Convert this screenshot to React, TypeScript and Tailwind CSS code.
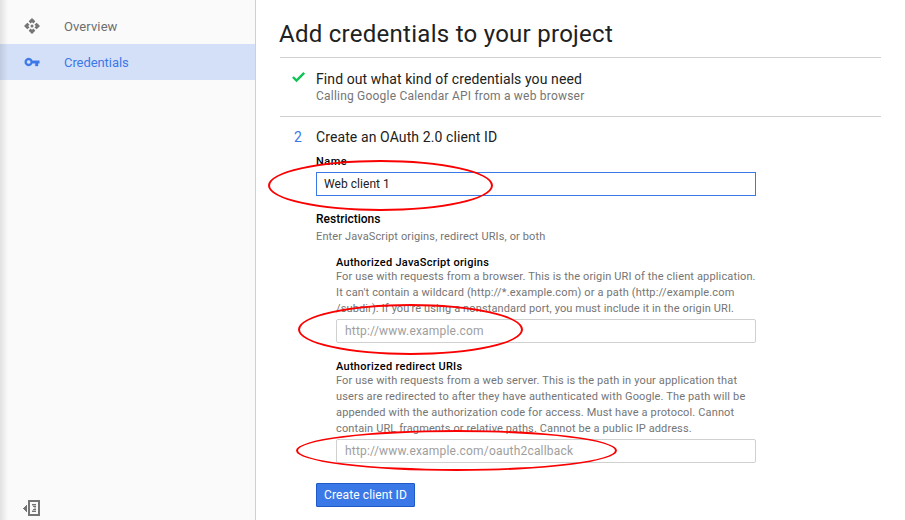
import type { ReactNode } from "react";

function ApiIcon() {
  return (
    <svg className="size-4" viewBox="0 0 16 16" fill="#757575">
      <path d="M8 0 11.300 3.300 9.500 5.500 8 4.200 6.500 5.500 4.700 3.300Z" />
      <path d="M8 16 11.300 12.700 9.500 10.500 8 11.800 6.500 10.500 4.700 12.700Z" />
      <path d="M0 8 3.300 4.700 5.500 6.500 4.200 8 5.500 9.500 3.300 11.300Z" />
      <path d="M16 8 12.700 4.700 10.500 6.500 11.800 8 10.500 9.500 12.700 11.300Z" />
      <circle cx="8" cy="8" r="1.500" />
    </svg>
  );
}

function KeyIcon() {
  return (
    <svg className="size-4" viewBox="0 0 24 24" fill="#3b78e7" stroke="#3b78e7" strokeWidth="0.500">
      <path d="M12.65 10C11.83 7.67 9.61 6 7 6c-3.31 0-6 2.69-6 6s2.69 6 6 6c2.61 0 4.83-1.67 5.65-4H17v4h4v-4h2v-4H12.65zM7 15c-1.65 0-3-1.35-3-3s1.350-3 3-3 3 1.350 3 3-1.350 3-3 3z" />
    </svg>
  );
}

function CollapseIcon() {
  return (
    <svg className="h-4 w-[18px]" viewBox="0 0 18 16" fill="#757575" shapeRendering="crispEdges">
      <path d="M0 8.500 4 5v7Z" />
      <path d="M5 0h12v16H5ZM7 2v12h8V2Z" fillRule="evenodd" />
      <path d="M9 4h4v1H9ZM10 6h3v1h-3ZM10 9h3v1h-3ZM9 11h4v1H9Z" />
      <path d="M9 5h4v1H9ZM11 7h2v2h-2ZM9 10h4v1H9Z" opacity="0.450" />
    </svg>
  );
}

function Ellipse({ className }: { className: string }) {
  return <div className={`pointer-events-none absolute rounded-[50%] border-2 border-[#fa0000] ${className}`} />;
}

function NavItem({ icon, label, active }: { icon: ReactNode; label: string; active?: boolean }) {
  return (
    <div
      className={`flex h-9 items-center gap-6 pl-6 text-[13px] ${
        active ? "bg-[#d4e0f7] tracking-[-0.07px] text-[#3b78e7]" : "tracking-[0.1px] text-[#6e6e6e]"
      }`}
    >
      {icon}
      <span className="pt-0.5">{label}</span>
    </div>
  );
}

function Field({ title, lines, placeholder }: { title: string; lines: string[]; placeholder: string }) {
  return (
    <div className="ml-5 w-[420px]">
      <div className="h-3.5 text-[11px] leading-4 font-medium tracking-[0.28px] text-black">{title}</div>
      <div className="text-[11px] leading-4 tracking-[0.145px] whitespace-nowrap text-[#757575]">
        {lines.map((line) => (
          <div key={line} className="last:tracking-[0.12px]">
            {line}
          </div>
        ))}
      </div>
      <div className="mt-[2px] flex h-6 items-center rounded-[2px] border border-[#d0d0d0] pl-2 text-[12px] tracking-[0.2px] text-[#9e9e9e]">
        {placeholder}
      </div>
    </div>
  );
}

export default function App() {
  return (
    <div className="relative flex h-[520px] w-[905px] overflow-hidden bg-white font-['Roboto',sans-serif]">
      <aside className="relative flex w-64 shrink-0 flex-col border-r border-[#d0d0d0] bg-[#fafafa] pt-2">
        <NavItem icon={<ApiIcon />} label="Overview" />
        <NavItem icon={<KeyIcon />} label="Credentials" active />
        <div className="mt-auto mb-1 ml-[23px]">
          <CollapseIcon />
        </div>
        <div className="absolute inset-y-0 left-0 w-2 bg-linear-to-r from-black/10 to-transparent" />
      </aside>
      <main className="flex flex-1 flex-col pr-6 pl-6 whitespace-nowrap text-[#212121]">
        <h1 className="mt-[18px] -ml-px h-[39px] text-[24px] leading-8 tracking-[0.27px]">
          Add credentials to your project
        </h1>
        <section className="flex h-[59px] border-t border-[#d0d0d0] pt-[11px]">
          <div className="w-9 pt-[3px] pl-3">
            <svg className="h-3 w-[14px]" viewBox="0 0 14 12" fill="none" stroke="#0fc456" strokeWidth="2.400">
              <path d="M0.900 5 4.500 8.600 12.200 0.900" />
            </svg>
          </div>
          <div>
            <div className="h-[19px] text-[14px] leading-5 tracking-[0.09px]">
              Find out what kind of credentials you need
            </div>
            <div className="text-[12px] leading-4 tracking-[0.21px] text-[#757575]">
              Calling Google Calendar API from a web browser
            </div>
          </div>
        </section>
        <section className="flex border-t border-[#d0d0d0] pt-[10px]">
          <div className="w-9 pl-3.5 text-[14px] leading-5 text-[#3b78e7]">2</div>
          <div className="w-[440px]">
            <div className="text-[14px] leading-5 tracking-[0.1px]">Create an OAuth 2.0 client ID</div>
            <div className="mt-[7px] text-[11px] leading-4 font-medium tracking-[0.5px] text-black">Name</div>
            <div className="mt-[2px] flex h-6 items-center border border-[#3b78e7] pl-[7px] text-[12px] tracking-[0.05px]">
              Web client 1
            </div>
            <div className="mt-[15px] text-[12px] leading-4 font-medium text-black">Restrictions</div>
            <div className="mt-0.5 mb-2.5 text-[11px] leading-4 tracking-[0.135px] text-[#757575]">
              Enter JavaScript origins, redirect URIs, or both
            </div>
            <Field
              title="Authorized JavaScript origins"
              lines={[
                "For use with requests from a browser. This is the origin URI of the client application.",
                "It can't contain a wildcard (http://*.example.com) or a path (http://example.com",
                "/subdir). If you're using a nonstandard port, you must include it in the origin URI.",
              ]}
              placeholder="http://www.example.com"
            />
            <div className="h-4" />
            <Field
              title="Authorized redirect URIs"
              lines={[
                "For use with requests from a web server. This is the path in your application that",
                "users are redirected to after they have authenticated with Google. The path will be",
                "appended with the authorization code for access. Must have a protocol. Cannot",
                "contain URL fragments or relative paths. Cannot be a public IP address.",
              ]}
              placeholder="http://www.example.com/oauth2callback"
            />
            <button className="mt-5 flex h-6 w-[99px] items-center justify-center rounded-[1px] border border-[#1f58c7] bg-[#3b78e7] text-[12px] tracking-[0.12px] text-white">
              Create client ID
            </button>
          </div>
        </section>
      </main>
      <Ellipse className="top-[160px] left-[268px] h-[51px] w-[225px]" />
      <Ellipse className="top-[304px] left-[298px] h-[51px] w-[225px]" />
      <Ellipse className="top-[430px] left-[296px] h-[41px] w-[321px]" />
    </div>
  );
}
